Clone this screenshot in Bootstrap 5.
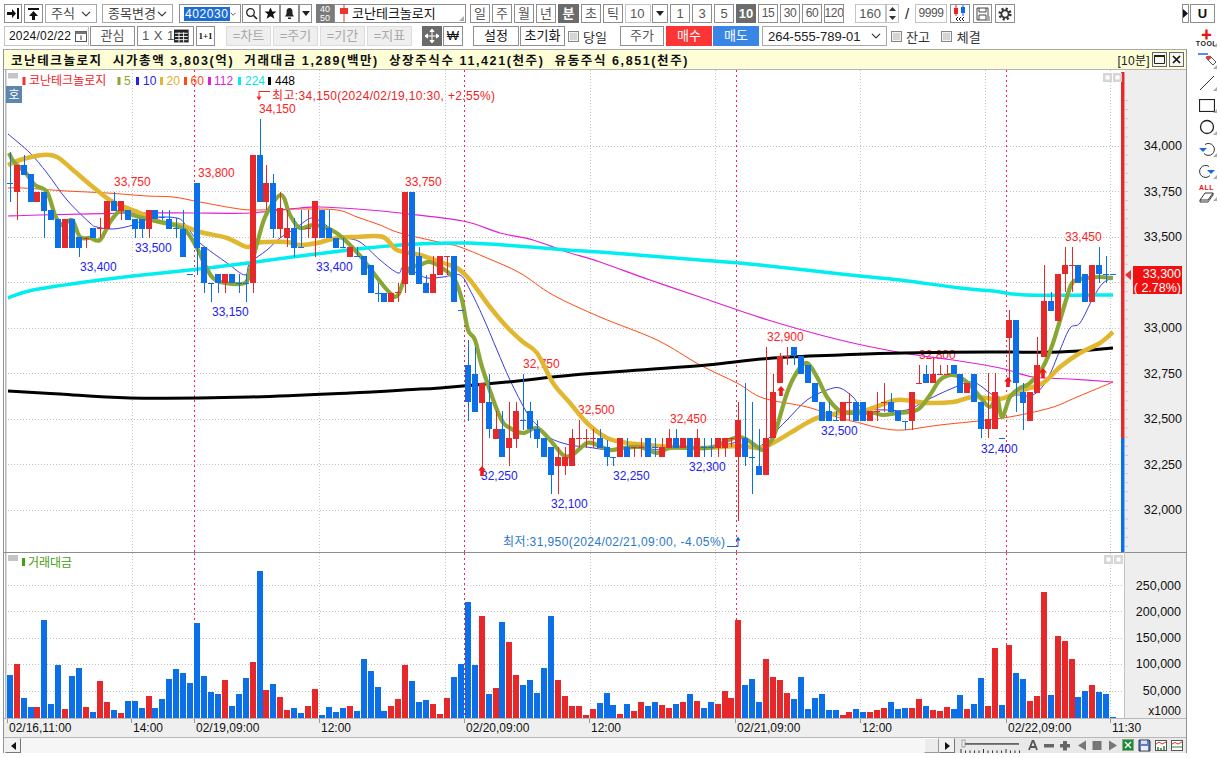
<!DOCTYPE html>
<html lang="ko"><head><meta charset="utf-8"><title>코난테크놀로지 차트</title>
<link href="https://cdn.jsdelivr.net/npm/bootstrap@5.3.0/dist/css/bootstrap.min.css" rel="stylesheet">
<style>
html,body{margin:0;background:#fff;overflow:hidden}
body{width:1221px;height:758px;font:13px "Liberation Sans","Noto Sans CJK KR",sans-serif;color:#333}
svg{display:block}
.rowa{height:25px;padding:4px 6px 2px 4px}
.rowb{height:24px;padding:1px 0 3px 4px}
.wrapm{height:733px}
.leftc{width:1190px}
.toolc{width:31px;padding-top:3px;padding-left:2px}
.tb{height:19px;padding:0;border:1px solid #8e8e8e;border-radius:0;background:#fff;color:#555;font-size:13px;line-height:17px;display:flex;align-items:center;justify-content:center;flex:none;white-space:nowrap;overflow:hidden}
.rowb .tb{height:20px;line-height:18px}
.tb.bk{color:#111}
.tb.dk{background:#6b6b6b;border-color:#6b6b6b;color:#fff;font-weight:700}
.tb.dis{background:#efefef;border-color:#dcdcdc;color:#a8a8a8}
.tb.lite{border-color:#c4c4c4}
.tb.rd{background:#fb3435;border-color:#fb3435;color:#fff}
.tb.bl{background:#3a86e6;border-color:#3a86e6;color:#fff}
.tb.lft{justify-content:flex-start;padding-left:4px}
.tb.nrw{font-size:12px;letter-spacing:-.4px}
.tb.nm{padding-left:5px}
.tsel{height:19px;padding:0 0 0 5px;border:1px solid #a8a8a8;border-radius:0;font-size:13px;line-height:17px;color:#444;background-position:right 5px center;background-size:10px 10px;flex:none}
.rowb .tsel{height:20px;color:#222}
.sel{background:#1a6dd6;color:#fff;padding:0 1px;line-height:14px;font-size:12px;letter-spacing:.6px}
.tile{background:#7b7b7b;border-color:#7b7b7b;color:#fff;font-size:9px;line-height:9px;flex-direction:column}
.mk{position:relative}
.mk::after{content:"";position:absolute;right:1px;bottom:1px;border-left:5px solid transparent;border-bottom:5px solid #aaa}
input.chkb[type=checkbox]{width:11px;height:11px;margin-top:0;border:1px solid #888;border-radius:0;background-color:#d4d4d4;flex:none;box-shadow:inset 0 0 0 1px #f2f2f2}
.w7{width:7px}.w13{width:13px}.w16{width:16px}.w18{width:18px}.w19{width:19px}.w20{width:20px}.w21{width:21px}.w25{width:25px}.w26{width:26px}.w31{width:31px}.w32{width:32px}.w44{width:44px}.w45{width:45px}.w46{width:46px}.w52{width:52px}.w57{width:57px}.w62{width:62px}.w71{width:71px}.w85{width:85px}.w125{width:125px}.w132{width:132px}
.g1{margin-left:1px}.g2{margin-left:2px}.g3{margin-left:3px}.g4{margin-left:4px}.g5{margin-left:5px}.g6{margin-left:6px}.g9{margin-left:9px}.g10{margin-left:10px}.g11{margin-left:11px}.g13{margin-left:13px}
.slash{width:16px;text-align:center;color:#222;font-size:15px;flex:none}
.frame{margin-left:-1px;width:1184px;height:704px;border:1px solid #8d939b;border-top-color:#a9a9a9;background:#fff}
.titleb{height:20px;background:#fdfdd6;border-bottom:1px solid #b4b4b4;padding:0 2px 0 7px;color:#111}
.titlet{font-size:12.5px;font-weight:700;letter-spacing:1.6px;white-space:pre}
.tper{font-size:12px;color:#222;letter-spacing:.3px}
.winb{width:15px;height:15px;border:1px solid #666;background:#f7f7f0;margin-left:2px;padding:0;border-radius:0;display:flex;align-items:center;justify-content:center}
.axisb{height:19px}
.scrollb{height:16px;background:#f6f6f6;border-top:1px solid #b8b8b8;padding-left:1px}
.sbtn{width:16px;height:15px;background:#f2f2f2;border:1px solid;border-color:#eee #777 #777 #eee;padding:0;border-radius:0;display:flex;align-items:center;justify-content:center;flex:none}
.sthumb{width:15px;height:15px;background:#ececec;border:1px solid;border-color:#fafafa #999 #999 #fafafa;flex:none}
.icbar{background:#e9e9e9;height:15px}
.toolitem{height:22px;display:flex;align-items:center;justify-content:center;position:relative}
.toolitem::after{content:"";position:absolute;right:4px;bottom:3px;border-left:4px solid transparent;border-bottom:4px solid #aaa}
.tooltop{height:22px}
.ttxt{font:bold 7px "Liberation Sans",sans-serif;color:#222;letter-spacing:.5px;line-height:7px;text-align:center}
.ttop{color:#e11;font-size:11px;font-weight:900;line-height:9px;text-align:center}
.ms-3p{margin-left:3px}
.flex-none{flex:none}
.sdate{font-size:12px;letter-spacing:.2px}
#oneplus{font:bold 9px "Liberation Serif",serif}
.ttall{color:#e11;margin-bottom:1px}
.oxo{word-spacing:1px}
</style></head>
<body>
<div class="rowa d-flex align-items-center">
 <button class="btn tb bk w18"><svg width="14" height="13" viewBox="0 0 14 13"><path d="M1 5h5V2l4 4.5-4 4.500V8H1z" fill="#111"/><rect x="11" y="1" width="2" height="11" fill="#111"/></svg></button>
 <button class="btn tb bk w19 g2"><svg width="13" height="14" viewBox="0 0 13 14"><rect x="1" y="1" width="11" height="2" fill="#111"/><path d="M6.500 4l4.500 5H8v4H5V9H2z" fill="#111"/></svg></button>
 <select class="form-select tsel w52 g2"><option>주식</option></select>
 <select class="form-select tsel w71 g5"><option>종목변경</option></select>
 <div class="tb w62 g6 lft justify-content-between"><span class="sel">402030</span><svg class="me-1" width="10" height="8" viewBox="0 0 10 8"><path d="M1 2l4 4 4-4" fill="none" stroke="#555" stroke-width="1.500"/></svg></div>
 <button class="btn tb bk w18 g1"><svg width="13" height="13" viewBox="0 0 13 13"><circle cx="5.500" cy="5.500" r="3.800" fill="none" stroke="#222" stroke-width="1.300"/><path d="M8.500 8.500l3.500 3.500" stroke="#222" stroke-width="1.600"/></svg></button>
 <button class="btn tb bk w20"><svg width="13" height="13" viewBox="0 0 13 13"><path d="M6.500 .5l1.800 4h4.200l-3.400 2.800 1.300 4.400-3.900-2.500-3.900 2.500 1.300-4.400L.5 4.500h4.200z" fill="#111"/></svg></button>
 <button class="btn tb bk w19"><svg width="13" height="13" viewBox="0 0 13 13"><path d="M6.500 1c2 0 3 1.500 3 4v2l1.500 2.500H2L3.500 7V5c0-2.500 1-4 3-4z" fill="#222"/><rect x="5" y="10.500" width="3" height="1.500" fill="#222"/></svg></button>
 <button class="btn tb bk w13"><svg width="8" height="5" viewBox="0 0 8 5"><path d="M0 0h8L4 5z" fill="#222"/></svg></button>
 <div class="tb tile w18 g4"><span>40</span><span>50</span></div>
 <div class="tb w132 lft nm mk bk"><svg class="me-1" width="8" height="17" viewBox="0 0 8 17"><rect x="3.500" width="1" height="17" fill="#e33"/><rect y="3" width="8" height="6" fill="#e33"/></svg>코난테크놀로지</div>
 <button class="btn tb w20 g4">일</button><button class="btn tb w20 g2">주</button><button class="btn tb w20 g2">월</button><button class="btn tb w20 g2">년</button><button class="btn tb dk w21 g2">분</button><button class="btn tb w20 g2">초</button><button class="btn tb w20 g2">틱</button>
 <div class="tb w26 g2 lft lite">10</div>
 <button class="btn tb w16 g1"><svg width="8" height="5" viewBox="0 0 8 5"><path d="M0 0h8L4 5z" fill="#222"/></svg></button>
 <button class="btn tb w20 g2">1</button><button class="btn tb w20 g2">3</button><button class="btn tb w20 g2">5</button><button class="btn tb dk w20 g2">10</button><button class="btn tb nrw w20 g2">15</button><button class="btn tb nrw w20 g2">30</button><button class="btn tb nrw w20 g2">60</button><button class="btn tb nrw w20 g2">120</button>
 <div class="tb w31 g11 lite justify-content-end pe-1">160</div>
 <div class="tb w13 lite flex-column"><svg width="9" height="15" viewBox="0 0 9 15"><path d="M1 5l3.500-4L8 5zM1 10l3.500 4L8 10z" fill="#333"/></svg></div>
 <span class="slash">/</span>
 <div class="tb w32 lite nrw">9999</div>
 <button class="btn tb w20 g3"><svg width="16" height="17" viewBox="0 0 16 17"><rect x="2" y="3" width="4" height="6" fill="#e22"/><rect x="3.500" y="0" width="1" height="11" fill="#e22"/><rect x="9" y="2" width="4" height="6" fill="#16e"/><rect x="10.500" y="0" width="1" height="11" fill="#16e"/><path d="M6 12l-2 2 2 2M9 12l-2 2 2 2M12 12l-2 2 2 2" fill="none" stroke="#222"/></svg></button>
 <button class="btn tb w19 g3 mk"><svg width="13" height="14" viewBox="0 0 13 14"><path d="M1 1h11v12H1zM3 1v4h7V1M3 13V8h7v5" fill="none" stroke="#444"/></svg></button>
 <button class="btn tb w20 g3"><svg width="14" height="14" viewBox="0 0 14 14"><circle cx="7" cy="7" r="5.300" fill="none" stroke="#333" stroke-width="2.600" stroke-dasharray="2.100 2.060"/><circle cx="7" cy="7" r="3.600" fill="none" stroke="#333" stroke-width="1.800"/></svg></button>
 <button class="btn tb w7 ms-auto bk"><svg width="5" height="9" viewBox="0 0 5 9"><path d="M0 0l5 4.500L0 9z" fill="#111"/></svg></button>
 <button class="btn tb bk w25 g1 fw-bold">U</button>
</div>
<div class="wrapm d-flex">
 <div class="leftc">
  <div class="rowb d-flex align-items-center">
   <div class="tb w85 lite lft bk"><span class="me-1 sdate">2024/02/22</span><svg width="12" height="12" viewBox="0 0 12 12"><rect x=".5" y="1.500" width="11" height="10" fill="none" stroke="#555"/><rect x=".5" y="1.500" width="11" height="2.500" fill="#777"/><path d="M6 5.500v4.500" stroke="#333"/></svg></div>
   <button class="btn tb w45 g1">관심</button>
   <div class="tb w57 g2 lft"><span class="oxo">1 X 1</span><svg class="ms-auto me-1" width="16" height="14" viewBox="0 0 16 14"><rect width="16" height="14" fill="#222"/><path d="M1 4h14M1 7.500h14M1 11h14M5.500 3v11M10.500 3v11" stroke="#fff"/></svg></div>
   <button class="btn tb bk w19 g2" id="oneplus">1+1</button>
   <button class="btn tb dis w45 g11">=차트</button><button class="btn tb dis w45 g2">=주기</button><button class="btn tb dis w45 g2">=기간</button><button class="btn tb dis w45 g2">=지표</button>
   <button class="btn tb dk w20 g10"><svg width="16" height="16" viewBox="0 0 16 16"><path d="M8 1v14M1 8h14M8 1L6 3.500h4zM8 15l-2-2.500h4zM1 8l2.500-2v4zM15 8l-2.500-2v4z" stroke="#fff" fill="#fff"/></svg></button>
   <button class="btn tb bk w20 g1">₩</button>
   <button class="btn tb bk w46 g10">설정</button><button class="btn tb bk w45 g1">초기화</button>
   <input type="checkbox" class="form-check-input chkb g3"><span class="g4 flex-none">당일</span>
   <button class="btn tb w44 g13">주가</button><button class="btn tb rd w46 g2">매수</button><button class="btn tb bl w46 g1">매도</button>
   <select class="form-select tsel w125 g3"><option>264-555-789-01</option></select>
   <input type="checkbox" class="form-check-input chkb g4"><span class="g4">잔고</span>
   <input type="checkbox" class="form-check-input chkb g11"><span class="g5">체결</span>
  </div>
  <div class="frame ms-3p">
   <div class="titleb d-flex align-items-center">
    <span class="titlet">코난테크놀로지  시가총액 3,803(억)  거래대금 1,289(백만)  상장주식수 11,421(천주)  유동주식 6,851(천주)</span>
    <span class="tper ms-auto">[10분]</span>
    <button class="btn winb"><svg width="11" height="9" viewBox="0 0 11 9"><path d="M.5 1h10v7.500H.5z" fill="none" stroke="#222"/><rect y="0" width="11" height="2" fill="#222"/></svg></button>
    <button class="btn winb"><svg width="9" height="9" viewBox="0 0 9 9"><path d="M1 1l7 7M8 1L1 8" stroke="#111" stroke-width="1.700"/></svg></button>
   </div>
   <svg id="price" width="1182" height="482" viewBox="4 70 1182 482"></svg>
   <svg id="vol" width="1182" height="166" viewBox="4 552 1182 166"></svg>
   <svg id="axis" class="axisb" width="1182" height="19" viewBox="4 718 1182 19"></svg>
   <div class="scrollb d-flex align-items-center">
    <button class="btn sbtn"><svg width="5" height="8" viewBox="0 0 5 8"><path d="M5 0L0 4l5 4z" fill="#111"/></svg></button>
    <div class="flex-grow-1"></div>
    <div class="sthumb"></div>
    <button class="btn sbtn"><svg width="5" height="8" viewBox="0 0 5 8"><path d="M0 0l5 4-5 4z" fill="#111"/></svg></button>
    <svg class="icbar" width="231" height="15" viewBox="955 737 231 15">
     <rect x="963" y="742" width="56" height="1.800" fill="#666"/><rect x="962" y="739" width="3" height="7" fill="#eee" stroke="#777" stroke-width=".6"/>
     <path id="ticks" d="" stroke="#333" stroke-width="1" fill="none"/>
     <path d="M1029 749l3.500-9h1l3.500 9M1031 746h5" fill="none" stroke="#555" stroke-width="1.800"/>
     <rect x="1044" y="743" width="10" height="3.500" fill="#666"/>
     <path d="M1063 740h4v3h3v3.500h-3v3h-4v-3h-3V743h3z" fill="#666"/>
     <path d="M1086 739.500v10l-8-5z" fill="#777"/><rect x="1092.500" y="740" width="9" height="9" fill="#777"/><path d="M1109 739.500v10l8-5z" fill="#777"/>
     <rect x="1122.500" y="738.500" width="11" height="11" fill="#1d8a3a" stroke="#8a8" /><path d="M1125 741l6 6M1131 741l-6 6" stroke="#fff" stroke-width="1.400"/>
     <path d="M1139 739h10l1 1v10h-11z" fill="#5b7fc4" stroke="#334"/><rect x="1141" y="739.500" width="6" height="3.500" fill="#dde"/><rect x="1141" y="745" width="7" height="4.500" fill="#eee"/>
     <rect x="1155.500" y="739.500" width="11" height="10" fill="#fff" stroke="#555"/><path d="M1156 743l3-2 3 2 4-2" fill="none" stroke="#d33"/><path d="M1158 749v-3M1161 749v-2M1164 749v-4" stroke="#2a8a2a" stroke-width="1.500"/>
     <rect x="1171.500" y="739.500" width="11" height="10" fill="#fff" stroke="#555"/><path d="M1172 743l3-1.500 3 1.500 4-2" fill="none" stroke="#d33"/><path d="M1172 746h10" stroke="#2a8a2a"/>
    </svg>
   </div>
  </div>
 </div>
 <div class="toolc">
  <div class="toolitem tooltop flex-column"><div class="ttop">✚</div><div class="ttxt">TOOL</div></div>
  <div class="toolitem"><svg width="20" height="18" viewBox="0 0 20 18"><path d="M1 2h10" stroke="#2277dd" stroke-width="1.600"/><path d="M9 5l4-1 6 6-3 3-6-6z" fill="#fff" stroke="#555"/><path d="M9 5l4-1 1.500 1.500-3 3z" fill="#e33"/></svg></div>
  <div class="toolitem"><svg width="16" height="16" viewBox="0 0 16 16"><path d="M1 15L15 1" stroke="#333"/></svg></div>
  <div class="toolitem"><svg width="16" height="13" viewBox="0 0 16 13"><rect x=".5" y=".5" width="15" height="12" fill="none" stroke="#222" stroke-width="1.200"/></svg></div>
  <div class="toolitem"><svg width="16" height="16" viewBox="0 0 16 16"><circle cx="8" cy="8" r="6.500" fill="none" stroke="#222" stroke-width="1.300"/></svg></div>
  <div class="toolitem"><svg width="18" height="16" viewBox="0 0 18 16"><path d="M7 3.500a6 6 0 1 1-1 9" fill="none" stroke="#333"/><path d="M1 7h8L5 11z" fill="#1b66d8"/></svg></div>
  <div class="toolitem"><svg width="18" height="16" viewBox="0 0 18 16"><path d="M11 3.500a6 6 0 1 0 1 9" fill="none" stroke="#333"/><path d="M17 7H9l4 4z" fill="#1b66d8"/></svg></div>
  <div class="toolitem flex-column"><div class="ttxt ttall">ALL</div><svg width="15" height="11" viewBox="0 0 15 11"><path d="M1 8l5-7h8L9 8zM1 8v2h8l5-7V1" fill="#fff" stroke="#333"/></svg></div>
 </div>
</div>
<script>
const C=[
['b',183,184,152,202],['r',165,192,165,220],['b',165,175,155,175],['b',174,202],['r',192,202],['b',192,211,192,238],['b',210,220],['b',219,248],['r',219,248],['b',219,248],
['b',237,248,237,257],['r',238,239,237,248],['b',228,238],['r',228,229,218,238],['r',201,229],['b',201,211,192,211],['r',201,211,201,220],['b',210,220],['b',219,229,219,238],['b',219,229,219,238],
['r',210,229,210,238],['b',210,219],['b',217,218,210,220],['b',219,229,210,229],['b',228,229,218,238],['b',229,257,210,257],['b',274,275],['b',183,248,183,275],['b',247,283,247,293],['b',283,284,283,302],
['b',274,283,274,293],['r',274,283,274,293],['b',274,283],['b',283,284,274,293],['b',283,284,274,302],['r',155,283,155,293],['b',155,202,119,202],['r',183,202,165,210],['b',183,229,174,238],['r',208,229,192,238],
['r',228,238,210,247],['b',228,248,218,257],['b',247,248,210,248],['r',228,229,210,238],['r',201,238,201,257],['b',210,238],['b',228,238,210,238],['b',238,248],['b',247,248,238,248],['r',247,257],
['b',256,257,247,257],['b',256,275],['b',265,293],['b',293,294,283,302],['b',293,302],['r',293,302],['r',292,293,283,302],['r',192,284,192,293],['b',192,275],['b',256,284,247,284],
['b',283,293,275,293],['r',274,293,256,293],['r',256,275],['r',256,257,256,275],['b',256,302],['b',310,311],['b',365,402,340,421],['b',374,412,347,412],['r',383,403,383,468],['b',402,429,374,438],
['r',429,439,411,439],['b',429,457,411,457],['r',438,448,402,466],['r',411,439,402,448],['b',420,421,374,430],['b',411,429,402,438],['b',429,439,420,448],['b',438,457,438,457],['b',447,475,447,494],['r',457,466,447,494],
['r',457,466,447,475],['r',438,466,429,466],['r',438,439,420,448],['r',438,439,429,448],['r',438,439,429,448],['b',438,448,429,448],['b',447,457,440,466],['b',457,458,457,466],['r',438,457],['b',447,457,438,457],
['r',447,448,447,457],['r',447,448,438,457],['b',438,457],['b',447,448,438,457],['r',447,457,438,457],['r',438,448,429,448],['b',438,448,429,448],['r',438,448],['b',438,457],['r',438,457,429,457],
['b',447,448,438,457],['b',447,448,438,457],['r',438,448,438,457],['r',438,448,438,457],['r',438,439,438,447],['r',420,457,402,521],['b',438,457,383,466],['b',457,458,402,494],['b',466,475,429,475],['r',438,475,347,475],
['r',392,438,374,438],['r',356,383,353,383],['r',356,357,347,365],['b',347,356,347,365],['b',356,374],['b',365,383],['b',383,402],['b',402,421],['b',411,421,402,421],['b',420,421,411,421],
['r',402,421],['r',402,403,393,420],['b',402,421],['b',402,421,402,421],['r',411,421],['r',411,412,392,421],['r',402,403,383,412],['b',402,412,393,412],['b',411,421],['b',421,422,421,430],
['r',392,421,392,430],['r',383,384,365,383],['b',374,383,365,383],['r',374,383,357,383],['r',374,375,365,374],['r',374,375,365,374],['b',365,374],['b',374,393],['r',383,393],['b',374,402],
['b',402,429,402,438],['r',419,429,373,438],['r',392,429,373,429],['b',438,439],['r',320,338,310,383],['b',320,383,320,412],['b',392,403,383,430],['r',392,421],['r',365,393,337,393],['r',301,357,265,357],
['b',301,311,292,311],['r',274,321],['r',265,274,247,292],['r',265,266,247,292],['b',265,283],['b',274,302],['r',265,302],['b',265,274,247,283],['b',274,275,256,283],['b',274,275]];
const V=("375 342R 443 471 471R 210 462 345 477R 378 354 471R 486 393R 456R 480 489R 453 453 474 438R 474 447 387 357 369 399 219 378 426 432 390R 468 432 384 336R 63 420R 402 441R 480R 474 489 468R 417R 495 471 486 474 468R 483 327 363 411 483 468R 447R "+
"345R 393 456 450 462R 492R 444R 381 342 156 345 198R 432 414R 216 276R 375R 405 390 429 354 198 390R 438R 468R 468R 495R 477R 459 429 465 492R 462 483R 456R 468 456 465R 474R 462 456R 432 453R 474 456 462R 423R 444R 210R 405 387 456 327R 381R 390R 429R 447 381 "+
"477 444 432 480 480 495R 486R 477 486 486R 480R 474R 456 477 474 474R 447R 468 480R 483R 471R 477 435 477R 462 384 468R 294R 465 285R 369 387 453R 438R 126R 435 258R 273R 327R 441 423 405R 426 432 501").trim().split(/\s+/);
const RED="#e7282b",BLU="#0b6fe8",X=i=>Math.round(9.7+6.94*i);
const ML=[
["#3b3be0",1,[[8,134],[30,153],[47,173],[67,200],[90,223],[97,227],[113,229],[133,225],[148,218],[177,218],[187,227],[200,243],[227,263],[245,275],[250,263],[267,250],[280,238],[293,230],[300,225],[313,218],[330,228],[343,237],[360,242],[380,260],[398,273],[403,267],[415,272],[427,278],[443,277],[460,275],[470,290],[483,317],[497,350],[510,380],[527,413],[537,425],[550,438],[570,445],[587,447],[610,450],[627,447],[640,447],[660,450],[680,447],[707,447],[733,443],[742,437],[757,447],[770,437],[787,420],[807,400],[827,390],[840,388],[853,397],[863,408],[887,410],[907,410],[927,400],[953,388],[973,382],[993,395],[1007,398],[1017,395],[1033,395],[1047,380],[1060,350],[1070,328],[1080,323],[1093,298],[1103,283],[1113,278]]],
["#ff4a10",1,[[8,188],[23,188],[67,191],[107,193],[147,196],[173,197],[200,202],[233,208],[253,210],[300,209],[337,210],[357,217],[380,225],[400,233],[443,243],[460,247],[487,258],[520,273],[553,295],[600,317],[657,340],[700,365],[737,383],[763,398],[807,407],[840,418],[860,423],[880,428],[903,430],[940,425],[1003,418],[1050,408],[1077,397],[1113,382]]],
["#e21fd2",1.200,[[8,216],[40,215],[133,213],[193,213],[250,213],[300,208],[320,207],[357,209],[400,213],[463,221],[500,233],[533,240],[567,252],[600,262],[650,280],[700,297],[768,320],[840,340],[903,353],[953,360],[1000,368],[1033,377],[1070,379],[1113,382]]],
["#00eef0",3.500,[[8,298],[33,290],[100,280],[133,276],[190,270],[248,263],[300,256],[367,248],[417,244],[467,243],[517,246],[567,250],[600,252],[700,260],[760,265],[850,275],[900,280],[960,288],[993,291],[1027,295],[1113,295]]],
["#000",3,[[8,391],[60,394],[130,398],[250,397],[350,393],[420,389],[440,388],[507,382],[573,375],[640,370],[707,365],[773,358],[840,355],[903,353],[990,352],[1060,352],[1113,348]]],
["#e0b72e",4.500,[[8,165],[20,160],[43,155],[57,157],[73,170],[93,187],[113,202],[140,213],[160,222],[180,225],[200,232],[227,238],[247,247],[257,243],[267,242],[287,242],[300,245],[317,243],[337,238],[357,237],[383,237],[397,250],[420,255],[443,263],[457,268],[470,280],[490,307],[507,327],[523,342],[537,353],[553,383],[570,403],[587,423],[607,438],[627,443],[647,445],[673,447],[703,448],[740,446],[760,448],[773,443],[800,427],[817,418],[840,413],[867,410],[897,400],[927,403],[953,402],[973,397],[1000,399],[1020,391],[1043,383],[1060,367],[1080,353],[1100,343],[1113,332]]],
["#8aa735",4.200,[[9,153],[14,162],[25,172],[35,185],[47,192],[55,215],[62,225],[72,220],[80,237],[90,238],[100,240],[110,222],[120,211],[130,214],[143,218],[155,221],[170,224],[185,230],[197,248],[205,265],[213,278],[225,283],[245,283],[250,270],[258,240],[266,215],[281,195],[290,215],[300,228],[315,225],[335,232],[350,245],[362,258],[375,275],[390,293],[398,295],[408,270],[420,265],[430,262],[445,270],[455,280],[462,300],[468,330],[475,340],[483,370],[500,417],[510,428],[523,433],[537,428],[550,440],[563,455],[572,455],[587,443],[597,445],[610,450],[623,448],[640,447],[657,453],[670,448],[697,448],[713,447],[740,437],[762,450],[768,445],[775,433],[787,393],[797,372],[807,363],[817,377],[827,397],[840,411],[853,413],[873,413],[883,415],[897,413],[917,410],[930,395],[940,380],[953,375],[967,382],[980,397],[990,407],[997,397],[1002,417],[1010,397],[1020,388],[1030,383],[1043,367],[1053,343],[1067,297],[1073,282],[1087,278],[1100,277],[1113,278]]]
];
function smooth(p){let d="M"+p[0];for(let i=0;i<p.length-1;i++){const a=p[i-1]||p[i],b=p[i],c=p[i+1],e=p[i+2]||c;
 d+=`C${(b[0]+(c[0]-a[0])/6).toFixed(1)} ${(b[1]+(c[1]-a[1])/6).toFixed(1)} ${(c[0]-(e[0]-b[0])/6).toFixed(1)} ${(c[1]-(e[1]-b[1])/6).toFixed(1)} ${c[0]} ${c[1]}`;}return d;}
const GV=[132.5,319.5,445.5,590.5,715.5,860.5,985.5,1110.5],RV=[194.5,464.5,736.5,1006.5];
const CE='shape-rendering="crispEdges"';
const arrow=(x,y,f)=>`<path d="M${x} ${y-6}l4 4.500h-2.200v5.500h-3.600v-5.500H${x-4}z" fill="${f}"/>`;
const lab=(t,x,y,c)=>`<text x="${x}" y="${y+5}" fill="${c}">${t}</text>`;
const TXT='font-family="Liberation Sans,Noto Sans CJK KR,sans-serif" font-size="12"';
let s=`<g ${TXT}>`;
s+=`<rect x="4" y="70" width="1182" height="482" fill="#fff"/>`;
s+=`<rect x="5" y="70" width="1.500" height="482" fill="#b6b6b6"/>`;
[146,191.5,237,282.5,328,373.5,419,464.5,510].forEach(y=>s+=`<path d="M8 ${Math.floor(y)+.5}H1121" ${CE} stroke="#c0c0c0" stroke-dasharray="1 2"/>`);
GV.forEach(x=>s+=`<path d="M${x} 70V552" ${CE} stroke="#c8c8c8" stroke-dasharray="1 2"/>`);
RV.forEach(x=>s+=`<path d="M${x} 70V552" ${CE} stroke="#ff1f55" stroke-dasharray="2 3"/>`);
const R="#ff2222",B="#2222ee";
[["33,750",114,181,R],["33,800",198,172,R],["33,400",80,266,B],["33,500",135,247,B],["33,150",212,311,B],["33,400",316,266,B],["33,750",405,181,R],["32,750",523,363,R],["32,500",578,409,R],["32,250",481,475,B],["32,100",551,503,B],["32,250",613,475,B],["32,450",670,418,R],["32,300",689,466,B],["32,900",767,336,R],["32,500",821,430,B],["32,800",919,354,R],["32,400",981,448,B],["33,450",1065,236,R],["34,150",259,108,R]].forEach(a=>s+=lab(...a));
s+=`<text x="272" y="100" fill="#ee2222" textLength="223" lengthAdjust="spacing">최고:34,150(2024/02/19,10:30, +2.55%)</text><path d="M270 91.500h-11v5" fill="none" stroke="#e22"/><path d="M256.500 96.500h5l-2.500 4z" fill="#e22"/>`;
s+=`<text x="503" y="546" fill="#2a78c8" textLength="222" lengthAdjust="spacing">최저:31,950(2024/02/21,09:00, -4.05%)</text><path d="M727 546.500h11v-7" fill="none" stroke="#1a66cc"/><path d="M735.500 540.500h5l-2.500-4z" fill="#1a66cc"/>`;
ML.forEach(m=>s+=`<path d="${smooth(m[2])}" fill="none" stroke="${m[0]}" stroke-width="${m[1]}" stroke-linejoin="round" stroke-linecap="butt"/>`);
s+=`<g shape-rendering="crispEdges">`;
C.forEach((c,i)=>{const x=X(i),col=c[0]=="r"?RED:BLU,t=c[1],b=c[2],wt=c[3]??t,wb=c[4]??b;
 if(wt<t||wb>b)s+=`<rect x="${x}" y="${Math.min(wt,t)}" width="1" height="${Math.max(wb,b)-Math.min(wt,t)}" fill="${col}"/>`;
 s+=`<rect x="${x-3}" y="${t}" width="6" height="${Math.max(b-t,1)}" fill="${col}"/>`;});
s+=`</g>`;
[[482,472],[781,392],[1008,383],[1043,374]].forEach(a=>s+=arrow(a[0],a[1],"#f01818"));
/* axis */
s+=`<rect x="1125" y="70" width="61" height="482" fill="#eeeeee"/><rect x="1121" y="72" width="3.500" height="366" fill="${RED}"/><rect x="1121" y="438" width="3.500" height="114" fill="${BLU}"/>`;
[[34000,146],[33750,191.5],[33500,237],[33000,328],[32750,373.5],[32500,419],[32250,464.5],[32000,510]].forEach(([v,y])=>{s+=`<text x="1182" y="${y+4}" text-anchor="end" fill="#111" font-size="12.500">${v.toLocaleString("en-US")}</text>`;});
for(let y=100.5;y<552;y+=9.1)s+=`<path d="M1125 ${y}h3" stroke="#ccc"/>`;
s+=`<path d="M1125 275l6-5v10z" fill="#e8303a"/><rect x="1133" y="266" width="49" height="28" fill="#f01010"/><text x="1181" y="278" text-anchor="end" fill="#fff" font-size="12.500">33,300</text><text x="1181" y="292" text-anchor="end" fill="#fff" font-size="12.500">( 2.78%)</text>`;
/* legend */
s+=`<rect x="8" y="73" width="10" height="5.500" fill="#c4c4c4"/>`;
s+=`<rect x="6" y="86" width="16" height="17" fill="#5d86ae"/><text x="14" y="99" text-anchor="middle" fill="#fff" font-size="12">호</text>`;
[[22.5,"#e33",29,"코난테크놀로지","#ee2222"],[117.5,"#8aa735",124,"5","#8aa735"],[136,"#2222ee",143,"10","#2222ee"],[160,"#e0b72e",166.5,"20","#e0b020"],[184,"#ff4a10",190.5,"60","#ff4a10"],[208,"#e21fd2",214,"112","#e21fd2"],[238,"#00eef0",245,"224","#00e5e8"],[268,"#000",275,"448","#000"]].forEach(l=>{s+=`<rect x="${l[0]}" y="77" width="3" height="8" fill="${l[1]}"/><text x="${l[2]}" y="85" fill="${l[4]}">${l[3]}</text>`;});
[1103,1113].forEach(x=>s+=`<rect x="${x}" y="73" width="9" height="9" fill="#d6d6d6"/><rect x="${x+2.5}" y="75.500" width="4" height="4" fill="#fff"/>`);
s+=`</g>`;
document.getElementById("price").innerHTML=s;
/* volume */
let v=`<g ${TXT}><rect x="4" y="552" width="1182" height="166" fill="#fff"/><rect x="5" y="552" width="1.500" height="166" fill="#b6b6b6"/><rect x="4" y="551.500" width="1182" height="1.500" fill="#8d8d8d"/>`;
[585,611,638,664,691].forEach(y=>v+=`<path d="M8 ${y+.5}H1124" ${CE} stroke="#c0c0c0" stroke-dasharray="1 2"/>`);
GV.forEach(x=>v+=`<path d="M${x} 553V718" ${CE} stroke="#c8c8c8" stroke-dasharray="1 2"/>`);
RV.forEach(x=>v+=`<path d="M${x} 553V718" ${CE} stroke="#ff1f55" stroke-dasharray="2 3"/>`);
v+=`<g shape-rendering="crispEdges">`;
V.forEach((t,i)=>{const r=/R$/.test(t),y=550+parseInt(t)/3;v+=`<rect x="${X(i)-3}" y="${y.toFixed(1)}" width="6" height="${(717.7-y).toFixed(1)}" fill="${r?RED:BLU}"/>`;});
v+=`</g><rect x="1125" y="553" width="61" height="165" fill="#eeeeee"/><rect x="1124" y="552" width="1" height="166" fill="#c4c4c4"/>`;
[["250,000",590,12.5],["200,000",616,12.5],["150,000",642,12.5],["100,000",668,12.5],["50,000",695,12.5],["x1000",714.5,12]].forEach(a=>v+=`<text x="1181" y="${a[1]}" text-anchor="end" fill="#111" font-size="${a[2]}">${a[0]}</text>`);
v+=`<rect x="8" y="555" width="10" height="6" fill="#c4c4c4"/><rect x="22" y="558" width="3" height="8" fill="#44a010"/><text x="28" y="567" fill="#44a010">거래대금</text>`;
[1104,1114].forEach(x=>v+=`<rect x="${x}" y="555" width="9" height="9" fill="#d6d6d6"/><rect x="${x+2.5}" y="557.500" width="4" height="4" fill="#fff"/>`);
v+=`</g>`;
document.getElementById("vol").innerHTML=v;
/* time axis */
let a=`<g ${TXT}><rect x="4" y="718" width="1182" height="19" fill="#efefef"/><rect x="4" y="718" width="1182" height="1" fill="#b9b9b9"/>`;
[[9,"02/16,11:00"],[133,"14:00"],[196,"02/19,09:00"],[321,"12:00"],[466,"02/20,09:00"],[591,"12:00"],[737,"02/21,09:00"],[862,"12:00"],[1008,"02/22,09:00"],[1112,"11:30"]].forEach(t=>{a+=`<path d="M${t[0]-1.5} 719v4" stroke="#999"/><text x="${t[0]}" y="732" fill="#111">${t[1]}</text>`;});
a+=`</g>`;
document.getElementById("axis").innerHTML=a;
let tk="";for(let x=961;x<1022;x+=4.5)tk+=`M${x} ${(Math.round((x-961)/4.5)%5==0)?748:749.5}V752`;
document.getElementById("ticks").setAttribute("d",tk);
</script>
<script src="https://cdn.jsdelivr.net/npm/bootstrap@5.3.0/dist/js/bootstrap.bundle.min.js"></script>
</body></html>
